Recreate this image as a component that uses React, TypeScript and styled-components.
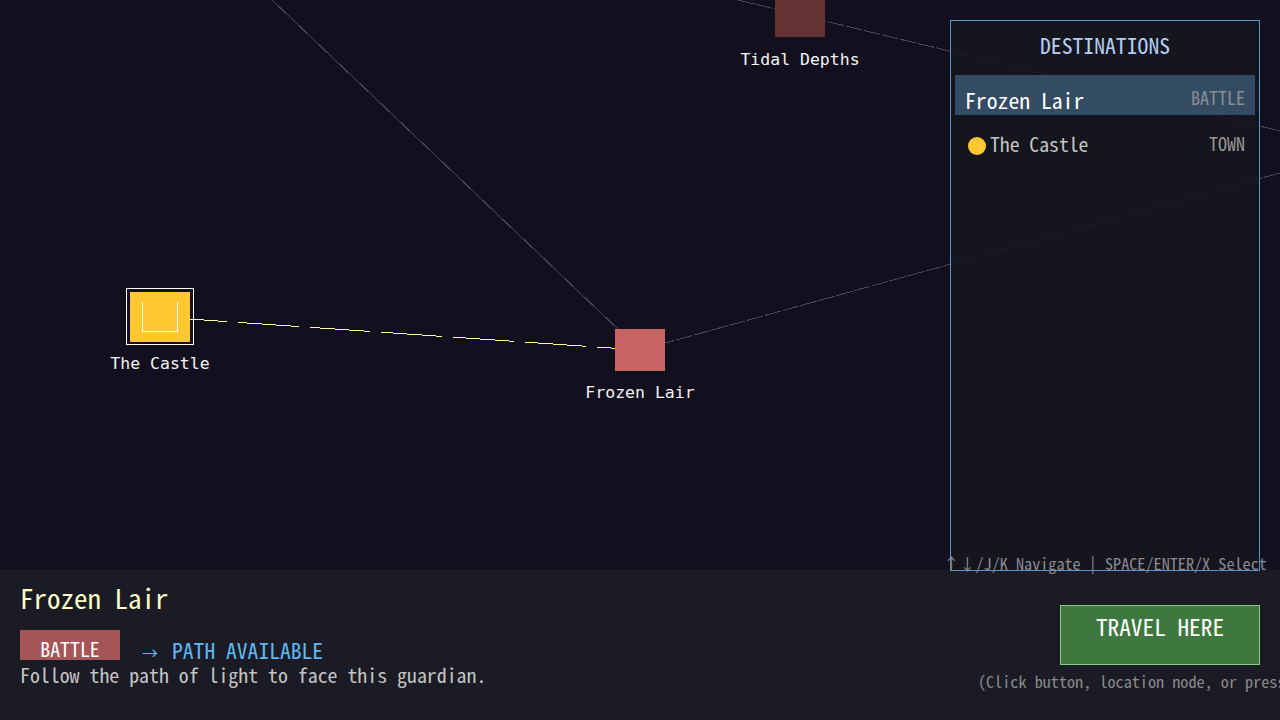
import React from 'react';
import styled, { createGlobalStyle } from 'styled-components';

const FONT = '"Noto Sans Mono CJK SC", "DejaVu Sans Mono", monospace';

const GlobalStyle = createGlobalStyle`
    html, body {
        margin: 0;
        padding: 0;
        background: #12101e;
        overflow: hidden;
    }
`;

const Screen = styled.div`
    width: 1280px;
    height: 720px;
    display: flex;
    flex-direction: column;
    overflow: hidden;
    font-family: ${FONT};
`;

const MapArea = styled.div`
    position: relative;
    height: 570px;
    flex: none;
    background: #12101e;
`;

const MapLines = styled.svg`
    position: absolute;
    left: 0;
    top: 0;
    shape-rendering: crispEdges;
`;

const Node = styled.div<{ $x: number; $y: number; $w: number; $h: number; $color: string }>`
    position: absolute;
    left: ${(p) => p.$x}px;
    top: ${(p) => p.$y}px;
    width: ${(p) => p.$w}px;
    height: ${(p) => p.$h}px;
    background: ${(p) => p.$color};
`;

const CastleRing = styled.div`
    position: absolute;
    left: 126px;
    top: 288px;
    width: 66px;
    height: 55px;
    border: 1px solid #fff;
`;

const CastleIcon = styled.div`
    position: absolute;
    left: 142px;
    top: 302px;
    width: 34px;
    height: 29px;
    border: 1px solid #fff;
    border-top: none;
`;

const NodeLabel = styled.div<{ $x: number; $y: number }>`
    position: absolute;
    left: ${(p) => p.$x}px;
    top: ${(p) => p.$y}px;
    transform: translateX(-50%);
    font-family: "DejaVu Sans Mono", monospace;
    font-size: 16.5px;
    line-height: 20px;
    color: #f4f4f4;
    white-space: nowrap;
`;

const Panel = styled.div`
    position: absolute;
    left: 950px;
    top: 20px;
    width: 300px;
    height: 549px;
    border: 1px solid #5c94d0;
    background: rgba(22, 22, 30, 0.88);
    display: flex;
    flex-direction: column;
    padding: 0 4px;
`;

const PanelTitle = styled.div`
    height: 54px;
    flex: none;
    text-align: center;
    font-size: 21.7px;
    line-height: 48px;
    color: #b4cdf5;
`;

const Row = styled.div<{ $selected?: boolean }>`
    height: 40px;
    flex: none;
    margin-bottom: 4px;
    padding: 0 10px;
    display: flex;
    justify-content: space-between;
    background: ${(p) => (p.$selected ? 'rgba(64, 98, 130, 0.7)' : 'transparent')};
`;

const RowName = styled.div<{ $selected?: boolean }>`
    display: flex;
    align-items: center;
    font-size: ${(p) => (p.$selected ? '21.7px' : '19.7px')};
    line-height: 22px;
    padding-top: 14px;
    height: 22px;
    color: ${(p) => (p.$selected ? '#fff' : '#c4c4c4')};
`;

const RowType = styled.div<{ $selected?: boolean }>`
    font-size: 18px;
    line-height: 20px;
    padding-top: ${(p) => (p.$selected ? '12px' : '14px')};
    color: ${(p) => (p.$selected ? '#8a8d92' : '#999')};
`;

const Dot = styled.span`
    width: 18px;
    height: 18px;
    margin: 3px 4px 0 3px;
    border-radius: 50%;
    background: #ffc832;
`;

const PanelHint = styled.div`
    position: absolute;
    left: 50%;
    bottom: -2px;
    transform: translateX(-50%);
    font-size: 16.2px;
    line-height: 18px;
    color: #8a8a92;
    white-space: nowrap;
`;

const BottomBar = styled.div`
    flex: 1;
    display: flex;
    justify-content: space-between;
    background: #1a1b24;
    padding: 0 20px;
`;

const InfoColumn = styled.div`
    display: flex;
    flex-direction: column;
`;

const InfoTitle = styled.div`
    margin-top: 13px;
    height: 47px;
    font-size: 27px;
    line-height: 30px;
    color: #ffffc8;
`;

const TagRow = styled.div`
    display: flex;
    height: 30px;
`;

const TypeTag = styled.div`
    width: 100px;
    height: 30px;
    background: #a55458;
    color: #fff;
    font-size: 19.8px;
    line-height: 20px;
    padding-top: 9px;
    box-sizing: border-box;
    text-align: center;
`;

const PathNote = styled.div`
    margin-left: 22px;
    font-size: 21.6px;
    line-height: 22px;
    padding-top: 9px;
    color: #5fb8f0;
    white-space: nowrap;
`;

const PathArrow = styled.span`
    display: inline-block;
    width: 16px;
    margin-right: 14px;
    font-size: 16px;
`;

const Description = styled.div`
    font-size: 19.85px;
    line-height: 22px;
    margin-top: 4px;
    color: #c4c4c4;
`;

const ActionColumn = styled.div`
    position: relative;
    padding-top: 35px;
`;

const TravelButton = styled.div`
    width: 198px;
    height: 58px;
    border: 1px solid #8cc88c;
    background: #3e783e;
    color: #fff;
    font-size: 23.3px;
    line-height: 40px;
    text-align: center;
`;

const ActionHint = styled.div`
    position: absolute;
    left: -82px;
    top: 102px;
    font-size: 16.2px;
    line-height: 18px;
    color: #8a8a8a;
    white-space: nowrap;
`;

export default function App() {
    return (
        <Screen>
            <GlobalStyle />
            <MapArea>
                <MapLines width={1280} height={570}>
                    <line x1={272} y1={0} x2={640} y2={350} stroke="#484659" />
                    <line x1={640} y1={350} x2={1280} y2={173} stroke="#484659" strokeDasharray="17 1.5" />
                    <line x1={738} y1={0} x2={1280} y2={131} stroke="#484659" strokeDasharray="17 1.5" />
                    <line x1={160} y1={317} x2={640} y2={350} stroke="#ffff96" strokeDasharray="61 11" strokeDashoffset={66} />
                </MapLines>
                <Node $x={775} $y={-13} $w={50} $h={50} $color="#653333" />
                <NodeLabel $x={800} $y={50}>Tidal Depths</NodeLabel>
                <CastleRing />
                <Node $x={130} $y={292} $w={60} $h={50} $color="#ffc832" />
                <CastleIcon />
                <NodeLabel $x={160} $y={354}>The Castle</NodeLabel>
                <Node $x={615} $y={329} $w={50} $h={42} $color="#c86464" />
                <NodeLabel $x={640} $y={383}>Frozen Lair</NodeLabel>
                <Panel>
                    <PanelTitle>DESTINATIONS</PanelTitle>
                    <Row $selected>
                        <RowName $selected>Frozen Lair</RowName>
                        <RowType $selected>BATTLE</RowType>
                    </Row>
                    <Row>
                        <RowName><Dot />The Castle</RowName>
                        <RowType>TOWN</RowType>
                    </Row>
                    <PanelHint>↑↓/J/K Navigate | SPACE/ENTER/X Select</PanelHint>
                </Panel>
            </MapArea>
            <BottomBar>
                <InfoColumn>
                    <InfoTitle>Frozen Lair</InfoTitle>
                    <TagRow>
                        <TypeTag>BATTLE</TypeTag>
                        <PathNote><PathArrow>→</PathArrow>PATH AVAILABLE</PathNote>
                    </TagRow>
                    <Description>Follow the path of light to face this guardian.</Description>
                </InfoColumn>
                <ActionColumn>
                    <TravelButton>TRAVEL HERE</TravelButton>
                    <ActionHint>(Click button, location node, or press SPACE)</ActionHint>
                </ActionColumn>
            </BottomBar>
        </Screen>
    );
}
